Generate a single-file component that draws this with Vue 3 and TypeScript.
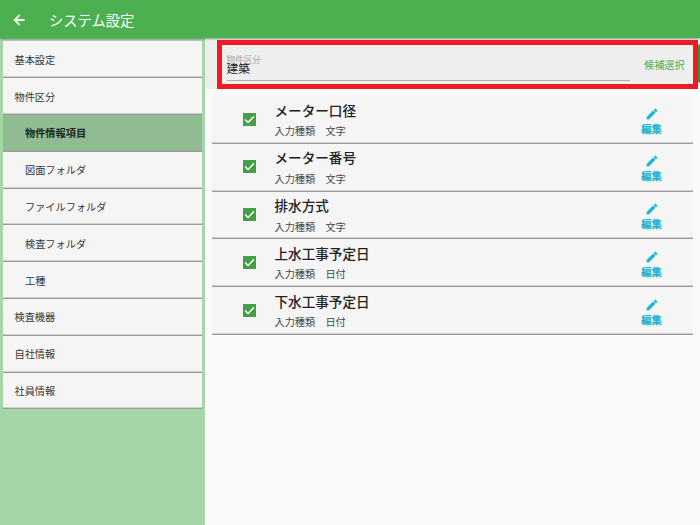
<script setup lang="ts">
interface MenuItem {
  label: string
  nested?: boolean
  active?: boolean
}

interface FieldItem {
  name: string
  type: string
}

const menu: MenuItem[] = [
  { label: '基本設定' },
  { label: '物件区分' },
  { label: '物件情報項目', nested: true, active: true },
  { label: '図面フォルダ', nested: true },
  { label: 'ファイルフォルダ', nested: true },
  { label: '検査フォルダ', nested: true },
  { label: '工種', nested: true },
  { label: '検査機器' },
  { label: '自社情報' },
  { label: '社員情報' },
]

const fields: FieldItem[] = [
  { name: 'メーター口径', type: '文字' },
  { name: 'メーター番号', type: '文字' },
  { name: '排水方式', type: '文字' },
  { name: '上水工事予定日', type: '日付' },
  { name: '下水工事予定日', type: '日付' },
]
</script>

<template>
  <div class="app">
    <header class="bar">
      <svg class="back" viewBox="0 0 24 24"><path d="M20 11H7.83l5.59-5.59L12 4l-8 8 8 8 1.41-1.41L7.83 13H20v-2z" /></svg>
      <h1>システム設定</h1>
    </header>
    <div class="body">
      <nav class="side">
        <a v-for="m in menu" :key="m.label" class="entry" :class="{ nested: m.nested, active: m.active }">{{ m.label }}</a>
      </nav>
      <main class="main">
        <section class="filter">
          <div class="frame">
            <div class="field">
              <label>物件区分</label>
              <span class="value">建築</span>
            </div>
            <button class="pick">候補選択</button>
          </div>
          <i class="edge"></i>
        </section>
        <ul class="list">
          <li v-for="f in fields" :key="f.name" class="row">
            <svg class="check" viewBox="3 3 18 18"><path class="box" d="M3 3h18v18H3z" /><path class="tick" d="M5.9 12l4.1 4.1 8.1-8.2" /></svg>
            <div class="text">
              <span class="name">{{ f.name }}</span>
              <span class="kind">入力種類　{{ f.type }}</span>
            </div>
            <button class="edit">
              <svg viewBox="0 0 24 24"><path d="M3 17.25V21h3.75L17.81 9.94l-3.75-3.75L3 17.25zM20.71 7.04a1 1 0 0 0 0-1.41l-2.34-2.34a1 1 0 0 0-1.41 0l-1.83 1.83 3.75 3.75 1.83-1.83z" /></svg>
              <span>編集</span>
            </button>
          </li>
        </ul>
      </main>
    </div>
  </div>
</template>

<style>
body {
  margin: 0;
  overflow: hidden;
}
</style>

<style scoped>
* {
  box-sizing: border-box;
}
.app {
  width: 700px;
  height: 525px;
  display: flex;
  flex-direction: column;
  overflow: hidden;
  background: #fafafa;
  color: #212121;
  font-family: "Noto Sans CJK JP", sans-serif;
}
button {
  border: 0;
  padding: 0;
  background: none;
  font-family: inherit;
}
.bar {
  position: relative;
  z-index: 1;
  flex: none;
  height: 38px;
  display: flex;
  align-items: center;
  padding: 1px 0 0 11px;
  background: #4caf50;
  box-shadow: 0 1px 2px rgba(0, 0, 0, 0.4);
}
.back {
  width: 16px;
  height: 16px;
  fill: #fff;
  stroke: #fff;
  stroke-width: 0.8;
}
h1 {
  margin: 0 0 0 22px;
  color: #fff;
  font-size: 14.3px;
  line-height: 20px;
  font-weight: 400;
}
.body {
  flex: 1;
  display: flex;
  min-height: 0;
}
.side {
  width: 205px;
  padding: 3.4px 3.5px 0 3px;
  background: #a5d6a7;
}
.entry {
  display: flex;
  align-items: center;
  height: 36.8px;
  padding: 0 0 0 11.5px;
  border-bottom: 1px solid #9a9a9a;
  box-shadow: inset 0 -1px #cfcfcf;
  background: #f5f5f5;
  color: #363636;
  font-size: 10.2px;
}
.nested {
  padding-left: 22px;
}
.active {
  background: #90bb93;
  color: #1c281d;
  box-shadow: inset 0 -1px #94ab95;
  font-weight: 700;
}
.main {
  flex: 1;
  display: flex;
  flex-direction: column;
}
.filter {
  position: relative;
  height: 51px;
  padding: 2px 2px 0 12px;
  background: linear-gradient(#eee, #eee) left / 493px 100% no-repeat;
}
.frame {
  height: 49px;
  display: flex;
  border: 5px solid #ed1c24;
  background: #eee;
}
.field {
  width: 403px;
  height: 36px;
  margin-left: 4.5px;
  display: flex;
  flex-direction: column;
  border-bottom: 1px solid #b0b0b0;
}
label {
  margin-top: 9px;
  height: 8px;
  font-size: 8.6px;
  line-height: 10px;
  color: #aaa;
}
.value {
  font-size: 11.7px;
  line-height: 12px;
}
.pick {
  margin: 0 0 0 14.5px;
  height: 38px;
  color: #4caf50;
  font-size: 10.2px;
  font-weight: 400;
}
.edge {
  position: absolute;
  right: 0;
  top: 6px;
  width: 2px;
  height: 39px;
  border-radius: 2px 0 0 2px;
  background: #388e3c;
}
.list {
  margin: 7px 7px 0 6.5px;
  padding: 0;
  list-style: none;
}
.row {
  height: 47.75px;
  display: flex;
  border-bottom: 1px solid #9a9a9a;
  box-shadow: inset 0 -1px #cfcfcf;
  background: #f5f5f5;
}
.check {
  width: 13px;
  height: 13px;
  margin: 16.6px 18.5px 0 31.5px;
}
.box {
  fill: #43a047;
}
.tick {
  fill: none;
  stroke: #fff;
  stroke-width: 2.2;
}
.text {
  flex: 1;
  display: flex;
  flex-direction: column;
}
.name {
  margin-top: 3.5px;
  font-size: 13.6px;
  line-height: 20px;
  font-weight: 500;
}
.kind {
  margin-top: 3.5px;
  font-size: 10.2px;
  line-height: 15px;
  color: #484848;
}
.edit {
  width: 40px;
  height: 42px;
  margin-right: 21.5px;
  padding-top: 10.6px;
  display: flex;
  flex-direction: column;
  align-items: center;
  color: #1fb5c9;
  font-size: 10.2px;
  line-height: 15px;
  font-weight: 700;
  -webkit-text-stroke: 0.25px #1fb5c9;
}
.edit svg {
  width: 14px;
  height: 14px;
  flex: none;
  fill: currentColor;
  stroke: currentColor;
  stroke-width: 0.5;
}
</style>
